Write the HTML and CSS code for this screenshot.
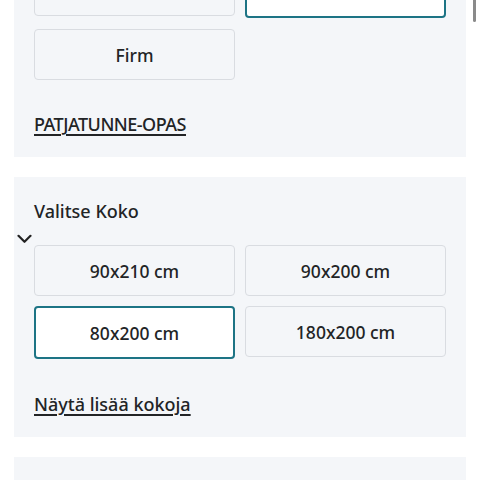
FILE: index.html
```html
<!DOCTYPE html>
<html lang="fi">
<head>
<meta charset="utf-8">
<link rel="stylesheet" href="styles.css">
</head>
<body>
<div class="page">
  <section class="panel panel-firmness">
    <div class="options options-firmness">
      <button class="opt">Soft</button>
      <button class="opt opt-selected">Medium</button>
      <button class="opt">Firm</button>
    </div>
    <a class="link link-caps" href="#">PATJATUNNE-OPAS</a>
  </section>

  <section class="panel panel-size">
    <h2 class="title">Valitse Koko</h2>
    <div class="toggle">
      <svg width="15" height="10" viewBox="0 0 15 10"><path d="M1.5 1.8 L7.5 7.8 L13.5 1.8" fill="none" stroke="#222" stroke-width="2.2" stroke-linecap="round" stroke-linejoin="round"/></svg>
    </div>
    <div class="options">
      <button class="opt">90x210 cm</button>
      <button class="opt">90x200 cm</button>
      <button class="opt opt-selected">80x200 cm</button>
      <button class="opt">180x200 cm</button>
    </div>
    <a class="link link-more" href="#">Näytä lisää kokoja</a>
  </section>

  <section class="panel panel-next"></section>
</div>
<div class="scrollbar"></div>
</body>
</html>
```
FILE: styles.css
```css
html, body {
  margin: 0;
  padding: 0;
  background: #ffffff;
  overflow: hidden;
}
body {
  font-family: "Noto Sans", "Open Sans", sans-serif;
  color: #222426;
  width: 480px;
  height: 480px;
}
.page {
  display: flex;
  flex-direction: column;
  gap: 20px;
  padding: 0 14px;
}
.panel {
  background: #f4f6f9;
  padding: 22px 20px 22px;
  display: flex;
  flex-direction: column;
}
.panel-firmness {
  margin-top: -56px;
  padding-top: 21px;
  padding-bottom: 21px;
}
.panel-size {
  padding-top: 22px;
  padding-bottom: 21px;
}
.panel-next {
  height: 60px;
}
.options {
  display: grid;
  grid-template-columns: 1fr 1fr;
  column-gap: 10px;
  row-gap: 10px;
  align-items: start;
}
.options-firmness {
  row-gap: 11px;
}
.opt {
  box-sizing: content-box;
  height: 49px;
  padding: 0;
  margin: 0;
  border: 1px solid #d9dce1;
  border-radius: 4px;
  background: #f4f6f9;
  font-family: "Noto Sans", "Open Sans", sans-serif;
  font-size: 17.5px;
  font-weight: 500;
  color: #222426;
  text-align: center;
}
.opt-selected {
  border: 2px solid #1d7485;
  background: #ffffff;
}
.title {
  margin: 0;
  font-size: 18px;
  font-weight: 500;
  line-height: 24px;
}
.toggle {
  height: 22px;
  margin-left: -17px;
  display: flex;
  align-items: flex-start;
}
.toggle svg {
  margin-top: 11px;
}
.link {
  align-self: flex-start;
  font-size: 18px;
  font-weight: 500;
  line-height: 24px;
  color: #222426;
  text-decoration: underline;
  text-decoration-thickness: 1.5px;
  text-underline-offset: 3px;
}
.link-caps {
  margin-top: 32px;
  letter-spacing: -0.5px;
}
.link-more {
  margin-top: 33px;
}
.scrollbar {
  position: fixed;
  top: 0;
  left: 473px;
  width: 3px;
  height: 22px;
  border-radius: 0 0 2px 2px;
  background: #8a8a8a;
}
```
